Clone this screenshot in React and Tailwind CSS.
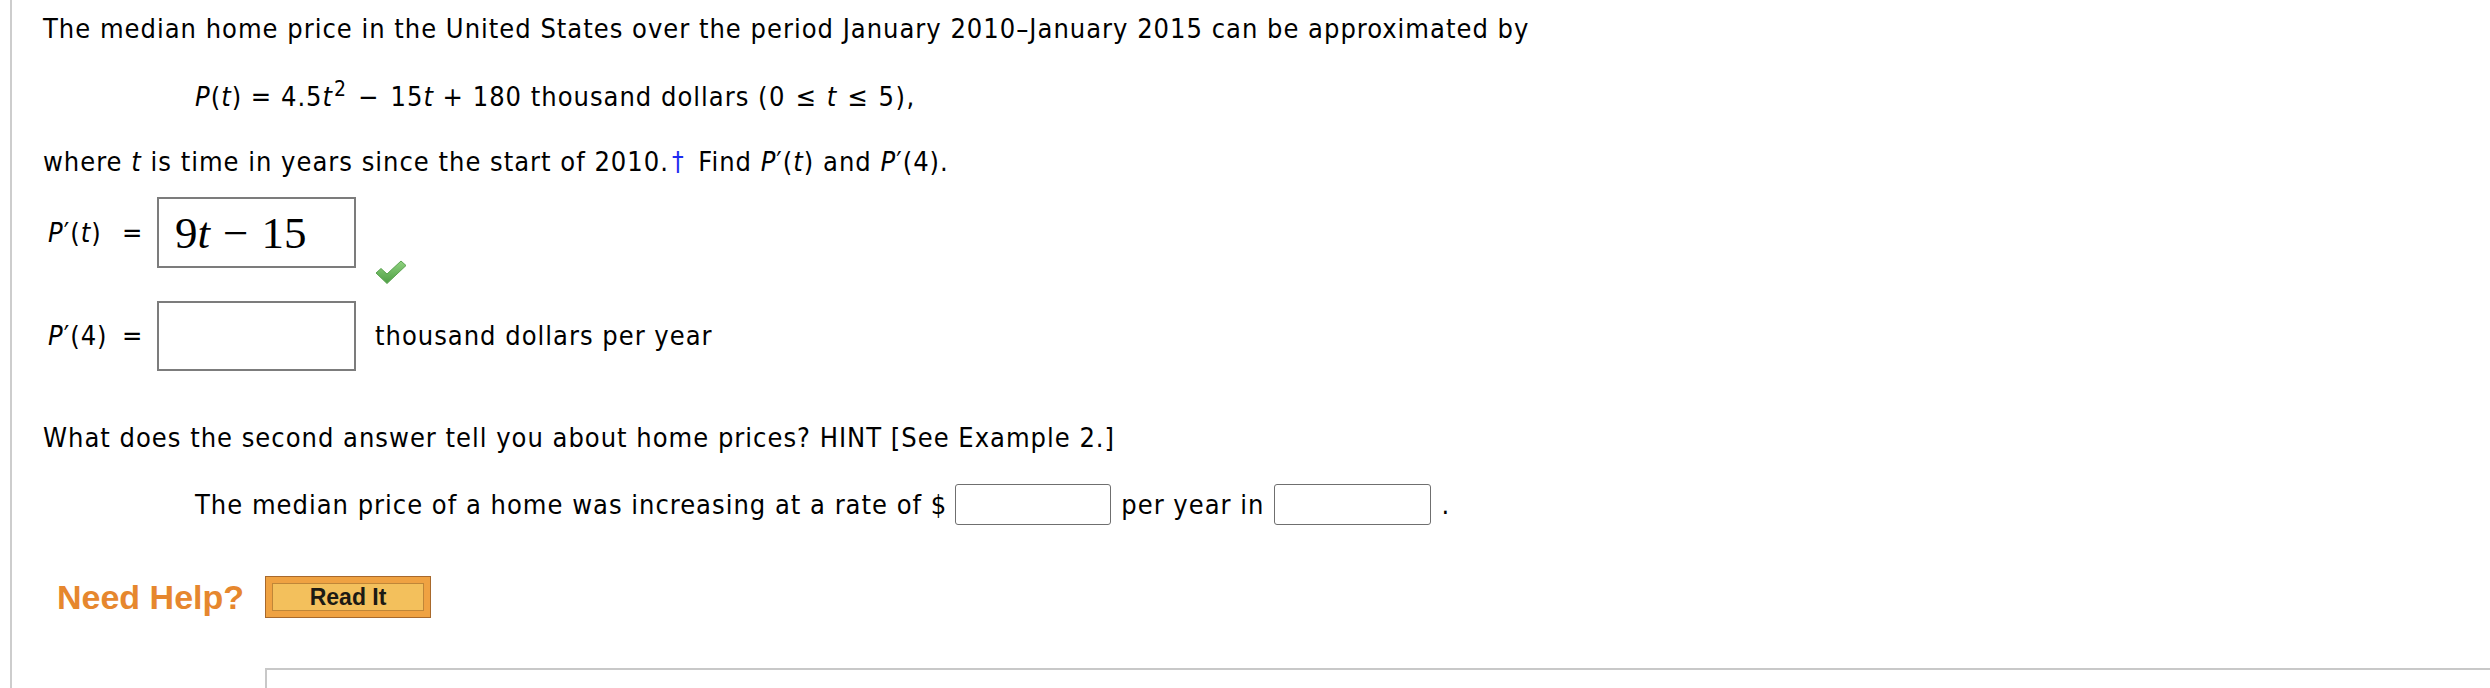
export default function App() {
  return (
    <div className="w-[2490px] h-[688px] bg-white overflow-hidden">
      <div className="ml-[10px] h-full border-l-2 border-[#cdcdcd] pl-[31px] text-black text-[27px] tracking-[1px] leading-[32px] font-['DejaVu_Sans_Condensed','DejaVu_Sans',sans-serif] flex flex-col">
        <div className="mt-[13px] whitespace-nowrap">
          The median home price in the United States over the period January 2010–January 2015 can be approximated by
        </div>
        <div className="mt-[36px] pl-[152px] whitespace-nowrap">
          <i>P</i>(<i>t</i>) = 4.5<i>t</i>
          <sup className="text-[21px] ml-[1px]">2</sup>
          <span className="mx-[11px]">−</span>15<i>t</i> + 180 thousand dollars{" "}
          <span className="tracking-[1.6px]">(0 ≤ <i>t</i> ≤ 5),</span>
        </div>
        <div className="mt-[33px] whitespace-nowrap">
          where <i>t</i> is time in years since the start of 2010.
          <span className="text-[#1d2bf0] text-[26px] ml-[3px] mr-[5px]">†</span> Find <i>P</i>′(<i>t</i>) and{" "}
          <i>P</i>′(4).
        </div>

        <div className="mt-[19px] flex items-start">
          <div className="w-[79px] pl-[5px] h-[71px] flex items-center whitespace-nowrap">
            <span>
              <i>P</i>′(<i>t</i>)
            </span>
          </div>
          <div className="w-[35px] h-[71px] flex items-center">=</div>
          <div className="w-[199px] h-[71px] border-2 border-[#7c7c7c] flex items-center pl-[16px] tracking-normal font-['Liberation_Serif','DejaVu_Serif',serif] text-[45px]">
            <span>9</span>
            <i>t</i>
            <span className="mx-[13px]">−</span>
            <span>15</span>
          </div>
          <div className="ml-[19px] mt-[63px]">
            <svg width="32" height="25" viewBox="0 0 32 25">
              <defs>
                <linearGradient id="ck" x1="0" y1="0" x2="0" y2="1">
                  <stop offset="0" stopColor="#8fd27f" />
                  <stop offset="1" stopColor="#4e9e44" />
                </linearGradient>
              </defs>
              <path
                d="M1 13 L6 8.5 L12 14 L26 1 L31 5.5 L12 23.5 Z"
                fill="url(#ck)"
                stroke="#5aa34f"
                strokeWidth="1"
                strokeLinejoin="round"
              />
            </svg>
          </div>
        </div>

        <div className="mt-[16px] flex items-center">
          <div className="w-[79px] pl-[5px] h-[70px] flex items-center whitespace-nowrap">
            <span>
              <i>P</i>′(4)
            </span>
          </div>
          <div className="w-[35px] h-[70px] flex items-center">=</div>
          <div className="w-[199px] h-[70px] border-2 border-[#7c7c7c]" />
          <div className="ml-[19px] whitespace-nowrap">thousand dollars per year</div>
        </div>

        <div className="mt-[51px] whitespace-nowrap">
          What does the second answer tell you about home prices? HINT [See Example 2.]
        </div>

        <div className="mt-[30px] pl-[152px] flex items-center whitespace-nowrap">
          <span>The median price of a home was increasing at a rate of $</span>
          <div className="ml-[8px] w-[156px] h-[41px] border-[1.5px] border-[#6f6f6f] rounded-[3px]" />
          <span className="ml-[10px]">per year in</span>
          <div className="ml-[10px] w-[157px] h-[41px] border-[1.5px] border-[#6f6f6f] rounded-[3px]" />
          <span className="ml-[10px]">.</span>
        </div>

        <div className="mt-[51px] flex items-center">
          <span className="ml-[14px] text-[34px] tracking-normal font-bold text-[#e6872e] font-['Liberation_Sans','Arial',sans-serif] whitespace-nowrap">
            Need Help?
          </span>
          <div className="ml-[21px] w-[166px] h-[42px] border border-[#a8692c] bg-[#efa242] p-[6px]">
            <div className="h-full border border-[#bf8638] bg-[#f3c05c] flex items-center justify-center">
              <span className="text-[23px] tracking-normal font-bold text-[#1c1a14] font-['Liberation_Sans','Arial',sans-serif] leading-none">
                Read It
              </span>
            </div>
          </div>
        </div>

        <div className="mt-[50px] ml-[222px] flex-1 border-t-2 border-l-2 border-[#c8c8c8]" />
      </div>
    </div>
  );
}
